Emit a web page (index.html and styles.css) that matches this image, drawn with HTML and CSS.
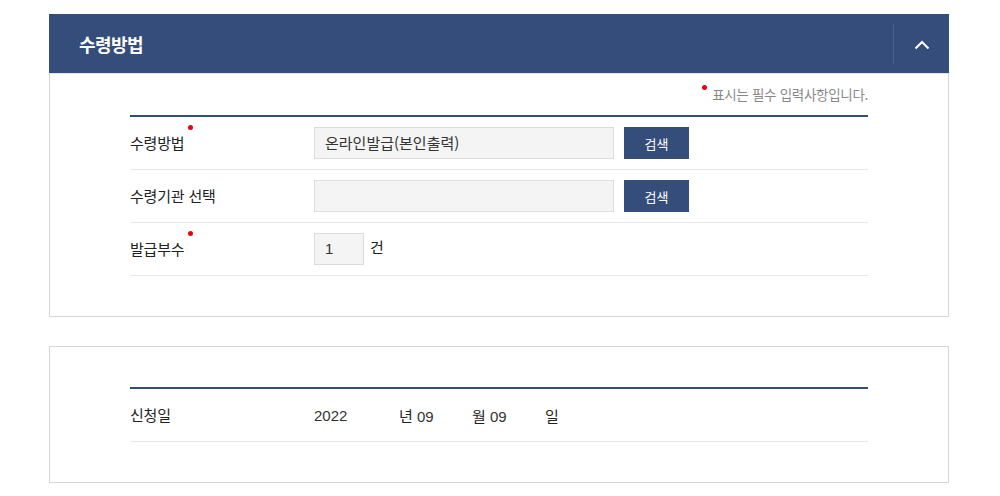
FILE: index.html
```html
<!DOCTYPE html>
<html lang="ko">
<head>
<meta charset="utf-8">
<link rel="stylesheet" href="styles.css">
</head>
<body>
<div class="wrap">
  <section class="panel">
    <div class="panel-head">
      <h2 class="panel-title">수령방법</h2>
      <button class="toggle" type="button" aria-label="접기">
        <svg width="16" height="10" viewBox="0 0 16 10"><path d="M1.5 8.5 L8 2 L14.5 8.5" fill="none" stroke="#fff" stroke-width="2"/></svg>
      </button>
    </div>
    <div class="panel-body">
      <p class="notice"><span class="req-dot"></span>표시는 필수 입력사항입니다.</p>
      <div class="form">
        <div class="row">
          <div class="label"><span class="req">수령방법</span></div>
          <div class="field">
            <div class="input wide">온라인발급(본인출력)</div>
            <button class="btn" type="button">검색</button>
          </div>
        </div>
        <div class="row">
          <div class="label">수령기관 선택</div>
          <div class="field">
            <div class="input wide"></div>
            <button class="btn" type="button">검색</button>
          </div>
        </div>
        <div class="row">
          <div class="label"><span class="req">발급부수</span></div>
          <div class="field">
            <div class="input small">1</div>
            <span class="unit">건</span>
          </div>
        </div>
      </div>
    </div>
  </section>

  <section class="panel plain">
    <div class="panel-body">
      <div class="form">
        <div class="row">
          <div class="label">신청일</div>
          <div class="field date">
            <span class="d-year">2022</span>
            <span class="d-seg"><span class="ko">년</span> 09</span>
            <span class="d-seg"><span class="ko">월</span> 09</span>
            <span class="ko">일</span>
          </div>
        </div>
      </div>
    </div>
  </section>
</div>
</body>
</html>
```
FILE: styles.css
```css
* { box-sizing: border-box; }
html, body { margin: 0; padding: 0; background: #fff; }
body {
  font-family: "Noto Sans CJK KR", "Noto Sans", sans-serif;
  color: #222;
}
.wrap {
  width: 900px;
  margin: 14px 0 0 49px;
}
.panel { margin-bottom: 29px; }
.panel-head {
  height: 59px;
  background: #344d7a;
  display: flex;
  align-items: center;
  justify-content: space-between;
}
.panel-title {
  margin: 0 0 0 30px;
  font-size: 18px;
  font-weight: 700;
  color: #fff;
  line-height: 1;
  letter-spacing: -0.6px;
}
.toggle {
  width: 56px;
  height: 40px;
  border: 0;
  border-left: 1px solid #4a628c;
  background: transparent;
  display: flex;
  align-items: center;
  justify-content: center;
  padding: 2px 0 0;
  cursor: pointer;
}
.panel-body {
  border: 1px solid #d6d6d6;
  border-top: 1px solid #e4e4e4;
  padding: 0 80px 40px;
}
.plain .panel-body { border-top: 1px solid #d6d6d6; padding-top: 40px; }
.notice {
  margin: 0;
  height: 41px;
  padding-top: 11px;
  text-align: right;
  font-size: 13.5px;
  line-height: 18px;
  color: #888;
  letter-spacing: -0.3px;
}
.req-dot {
  display: inline-block;
  width: 5px;
  height: 5px;
  border-radius: 50%;
  background: #e60012;
  vertical-align: top;
  margin: 0 5px 0 0;
}
.form { border-top: 2px solid #344d7a; }
.row {
  display: flex;
  align-items: center;
  height: 53px;
  border-bottom: 1px solid #e8e8e8;
}
.label {
  width: 184px;
  font-size: 15px;
  line-height: 20px;
  color: #222;
  letter-spacing: -0.2px;
}
.req { position: relative; }
.req::after {
  content: "";
  position: absolute;
  right: -9px;
  top: -7px;
  width: 5px;
  height: 5px;
  border-radius: 50%;
  background: #e60012;
}
.field { display: flex; align-items: center; }
.input {
  height: 32px;
  background: #f4f4f4;
  border: 1px solid #dcdcdc;
  font-size: 15px;
  line-height: 30px;
  padding: 0 10px;
  color: #333;
}
.input.wide { width: 300px; }
.input.small { width: 50px; font-family: "Liberation Sans", sans-serif; font-size: 15px; }
.btn {
  margin-left: 10px;
  width: 65px;
  height: 32px;
  border: 0;
  background: #344d7a;
  color: #fff;
  font-family: "Noto Sans CJK KR", sans-serif;
  font-size: 13px;
  padding: 0;
}
.unit { margin-left: 6px; font-size: 15px; position: relative; top: -3px; }
.date {
  font-family: "Liberation Sans", sans-serif;
  font-size: 15px;
  color: #333;
}
.date .ko { font-family: "Noto Sans CJK KR", sans-serif; font-size: 15px; color: #222; }
.d-year { width: 85px; }
.d-seg { width: 73px; }
```
